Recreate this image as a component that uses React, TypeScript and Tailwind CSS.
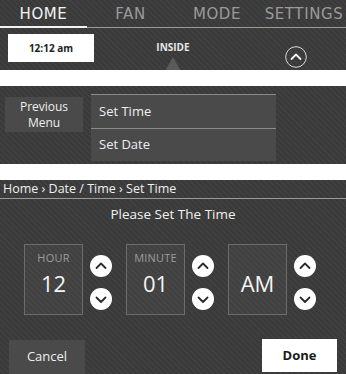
import React from "react";

const stripe =
  "bg-[#3b3b3b] bg-[repeating-linear-gradient(45deg,#3a3a3a_0px,#3a3a3a_2px,#434343_3px,#3a3a3a_4px)]";

function Circle({ dir, outline }: { dir: "up" | "down"; outline?: boolean }) {
  return (
    <svg width="22" height="22" viewBox="0 0 22 22" className="block">
      {outline ? (
        <circle cx="11" cy="11" r="10.3" fill="none" stroke="#d8d8d8" strokeWidth="1" />
      ) : (
        <circle cx="11" cy="11" r="11" fill="#ffffff" />
      )}
      <polyline
        points={dir === "up" ? "6.5,13 11,8.5 15.5,13" : "6.5,9.5 11,14 15.5,9.5"}
        fill="none"
        stroke={outline ? "#f0f0f0" : "#2a2a2a"}
        strokeWidth="1.8"
        strokeLinecap="round"
        strokeLinejoin="round"
      />
    </svg>
  );
}

function Spinner({ label, value, first }: { label?: string; value: string; first?: boolean }) {
  return (
    <div className={`flex items-start ${first ? "ml-[24px]" : "ml-[14px]"}`}>
      <div className="w-[59px] h-[71px] border border-[#6c6c6c] bg-[#ffffff0a] flex flex-col items-center">
        <div className="h-[24px] pt-[7px] text-[11px] leading-[11px] text-[#9c9c9c] tracking-[0.2px]">
          {label ?? ""}
        </div>
        <div className="text-[22px] leading-[22px] text-[#f4f4f4] mt-[3px]">{value}</div>
      </div>
      <div className="ml-[7px] flex flex-col mt-[11px] gap-[11px]">
        <Circle dir="up" />
        <Circle dir="down" />
      </div>
    </div>
  );
}

export default function App() {
  return (
    <div
      className="w-[346px] h-[374px] bg-white flex flex-col overflow-hidden"
      style={{ fontFamily: '"Open Sans", "Noto Sans", sans-serif' }}
    >
      {/* Panel 1 */}
      <div className={`h-[70px] ${stripe} flex flex-col`}>
        <div
          className="h-[26px] flex items-center text-[15px] leading-none tracking-[0.6px]"
          style={{ fontFamily: '"DejaVu Sans", sans-serif' }}
        >
          <div className="w-[87px] text-center text-[#f2f2f2] pt-[2px]">HOME</div>
          <div className="w-[87px] text-center text-[#9a9a9a] pt-[2px]">FAN</div>
          <div className="w-[86px] text-center text-[#9a9a9a] pt-[2px]">MODE</div>
          <div className="w-[86px] text-center text-[#9a9a9a] pt-[2px] pl-[2px]">SETTINGS</div>
        </div>
        <div className="h-[2px] flex items-end">
          <div className="w-[87px] h-[2px] bg-[#f2f2f2]" />
          <div className="flex-1 h-[1.5px] bg-[#9a9a9a]" />
        </div>
        <div className="flex-1 flex items-start overflow-hidden">
          <div className="ml-[8px] mt-[6px] w-[86px] h-[28px] bg-white flex items-center justify-center text-[10px] font-bold text-[#222]">
            12:12 am
          </div>
          <div className="ml-[59px] w-[40px] flex flex-col items-center mt-[14px]">
            <div className="text-[10px] leading-[10px] font-bold text-[#e6e6e6]">INSIDE</div>
            <div className="mt-[5px] w-0 h-0 border-l-[8px] border-r-[8px] border-b-[14px] border-l-transparent border-r-transparent border-b-[#5a5a5a]" />
          </div>
          <div className="ml-auto mr-[39px] mt-[18px]">
            <Circle dir="up" outline />
          </div>
        </div>
      </div>

      <div className="h-[16px]" />

      {/* Panel 2 */}
      <div className={`h-[78px] ${stripe} flex items-start`}>
        <div className="ml-[5px] mt-[11px] w-[78px] h-[35px] bg-[#4a4a4a] flex flex-col items-center justify-center text-[12px] leading-[16px] text-[#eeeeee]">
          <span className="block">Previous</span>
          <span className="block">Menu</span>
        </div>
        <div className="ml-[8px] mt-[8px] w-[185px] flex flex-col">
          <div className="h-[34px] bg-[#4a4a4a] border-t border-[#8a8a8a] flex items-center pl-[8px] text-[13px] text-[#eeeeee]">
            Set Time
          </div>
          <div className="h-[33px] bg-[#4a4a4a] border-t border-[#8a8a8a] flex items-center pl-[8px] text-[13px] text-[#eeeeee]">
            Set Date
          </div>
        </div>
      </div>

      <div className="h-[16px]" />

      {/* Panel 3 */}
      <div className={`flex-1 ${stripe} flex flex-col`}>
        <div className="h-[19px] flex items-center pl-[3px] text-[12.5px] text-[#f0f0f0] border-b border-[#9a9a9a]">
          Home › Date / Time › Set Time
        </div>
        <div className="h-[32px] flex items-center justify-center text-[13.5px] text-[#f0f0f0] pb-[1px]">
          Please Set The Time
        </div>
        <div className="mt-[13px] flex items-start">
          <Spinner label="HOUR" value="12" first />
          <Spinner label="MINUTE" value="01" />
          <Spinner value="AM" />
        </div>
        <div className="mt-auto flex items-end justify-between">
          <div className="ml-[9px] w-[76px] h-[34px] bg-[#4a4a4a] flex items-center justify-center text-[13px] text-[#eeeeee]">
            Cancel
          </div>
          <div className="mr-[9px] mb-[2px] w-[75px] h-[33px] bg-white flex items-center justify-center text-[13px] font-bold text-[#1a1a1a]">
            Done
          </div>
        </div>
      </div>
    </div>
  );
}
